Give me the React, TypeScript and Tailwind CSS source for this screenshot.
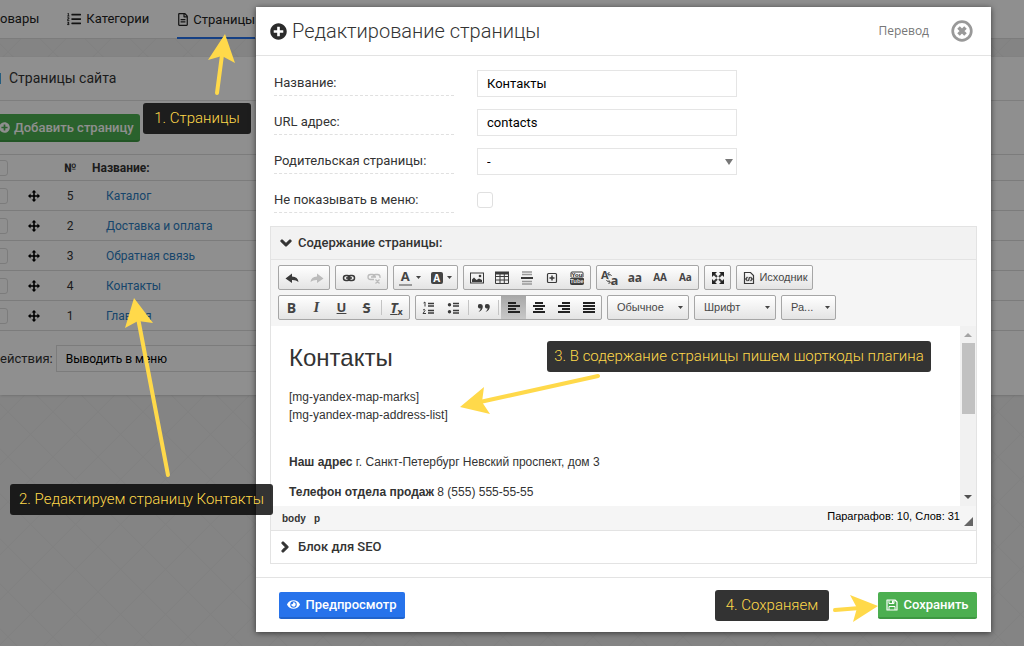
import type { ReactNode } from "react";
import { FaChevronDown, FaChevronRight, FaEye, FaListOl, FaPlusCircle, FaRegFileAlt } from "react-icons/fa";

const PAGES = [
  { id: 5, title: "Каталог" },
  { id: 2, title: "Доставка и оплата" },
  { id: 3, title: "Обратная связь" },
  { id: 4, title: "Контакты" },
  { id: 1, title: "Главная" },
];

const ALIGN = {
  left: ["M2 3h8", "M2 6h12", "M2 9h8", "M2 12h12"],
  center: ["M4 3h8", "M2 6h12", "M4 9h8", "M2 12h12"],
  right: ["M6 3h8", "M2 6h12", "M6 9h8", "M2 12h12"],
  justify: ["M2 3h12", "M2 6h12", "M2 9h12", "M2 12h12"],
};

function MoveIcon() {
  return (
    <svg viewBox="0 0 12 12" className="mx-auto block h-3 w-3 fill-black">
      <path d="M6 0l2.4 2.6H6.8v2.6h2.6V3.6L12 6 9.4 8.4V6.8H6.8v2.6h1.6L6 12 3.6 9.4h1.6V6.8H2.6v1.6L0 6l2.6-2.4v1.6h2.6V2.6H3.6z" />
    </svg>
  );
}

function FloppyIcon() {
  return (
    <svg viewBox="0 0 12 12" className="h-3 w-3 fill-none stroke-white">
      <path d="M1 1h8l2 2v8H1z" strokeWidth="1.2" strokeLinejoin="round" />
      <path d="M3 1v3.500h5V1M3 11V7.500h6V11" />
      <path d="M6 1.500h1.500v2.500H6z" className="fill-white" stroke="none" />
    </svg>
  );
}

function Backdrop() {
  return (
    <div className="absolute inset-0 overflow-hidden text-[13px] text-[#333]">
      <nav className="flex h-[39px] gap-7 border-b border-[#ddd] bg-white text-[#222]">
        <a href="#products" className="flex items-center">
          овары
        </a>
        <a href="#categories" className="flex items-center gap-[5px]">
          <FaListOl className="h-[14px] w-[14px]" />
          Категории
        </a>
        <a href="#pages" className="flex h-[39px] items-center gap-1 border-b-2 border-[#2773eb] pt-[2px]">
          <FaRegFileAlt className="h-[13px] w-3" />
          Страницы
        </a>
      </nav>

      <section className="mt-[18px] bg-white pb-[23px] shadow">
        <header className="flex h-[44px] items-center gap-2 border-b border-[#e0e0e0]">
          <span className="h-[11px] w-px bg-[#41a5e0]" />
          <h2 className="text-[14px]">Страницы сайта</h2>
        </header>

        <div className="pb-3 pt-[13px]">
          <button className="flex h-[28px] w-[140px] items-center gap-1 rounded-r-[3px] border-b-2 border-[#3e9842] bg-[#4caf50] pt-[1px] font-medium text-white">
            <FaPlusCircle className="-ml-px h-[11px] w-[11px]" />
            Добавить страницу
          </button>
        </div>

        <table className="w-full table-fixed border-collapse">
          <thead>
            <tr className="h-[26px] border-y border-[#ddd]">
              <th className="w-4">
                <input type="checkbox" aria-label="Выбрать все" className="-ml-2 block h-4 w-4 appearance-none rounded-[3px] border border-[#ddd]" />
              </th>
              <th className="w-9" />
              <th className="w-9 text-center text-[12px] font-bold">№</th>
              <th className="pl-1 text-left text-[12px] font-bold">Название:</th>
            </tr>
          </thead>
          <tbody>
            {PAGES.map((page) => (
              <tr key={page.id} className="h-[30px] border-b border-[#ddd]">
                <td>
                  <input type="checkbox" aria-label={page.title} className="-ml-2 block h-4 w-4 appearance-none rounded-[3px] border border-[#ddd]" />
                </td>
                <td>
                  <MoveIcon />
                </td>
                <td className="text-center text-[12px]">{page.id}</td>
                <td className="pl-[18px] text-[12px]">
                  <a href="#page" className="text-[#2b7cc0]">
                    {page.title}
                  </a>
                </td>
              </tr>
            ))}
          </tbody>
        </table>

        <div className="mt-[14px] flex items-center gap-[3px]">
          <label htmlFor="bulk-action">ействия:</label>
          <select id="bulk-action" className="h-[27px] w-[260px] appearance-none border border-[#ddd] pl-[9px] text-[12px] text-black">
            <option>Выводить в меню</option>
          </select>
        </div>
      </section>
    </div>
  );
}

function Field({ id, label, children }: { id: string; label: string; children: ReactNode }) {
  return (
    <div className="grid h-[27px] grid-cols-[180px_260px] gap-[23px]">
      <label htmlFor={id} className="flex h-[26px] items-center border-b border-dashed border-[#e0e0e0]">
        {label}
      </label>
      {children}
    </div>
  );
}

function Group({ className, children }: { className: string; children: ReactNode }) {
  return (
    <div
      className={`flex h-[25px] overflow-hidden rounded-[2px] border border-[#a6a6a6] bg-gradient-to-b from-white to-[#e4e4e4] ${className}`}
    >
      {children}
    </div>
  );
}

interface ToolProps {
  title: string;
  active?: boolean;
  children: ReactNode;
}

function Tool({ title, active, children }: ToolProps) {
  return (
    <button
      title={title}
      className={`flex flex-1 items-center justify-center font-['Open_Sans',sans-serif] font-bold text-[#444] ${
        active ? "bg-gradient-to-b from-[#a8a8a8] to-[#c8c8c8]" : ""
      }`}
    >
      {children}
    </button>
  );
}

function Icon({ children }: { children: ReactNode }) {
  return (
    <svg viewBox="0 0 16 16" className="h-4 w-4 shrink-0 fill-none stroke-[#3a3a3a]">
      {children}
    </svg>
  );
}

function AlignIcon({ kind }: { kind: keyof typeof ALIGN }) {
  return (
    <Icon>
      {ALIGN[kind].map((d) => (
        <path key={d} d={d} strokeWidth="2" className="stroke-[#222]" />
      ))}
    </Icon>
  );
}

function Caret() {
  return (
    <svg viewBox="0 0 5 3" className="h-[3px] w-[5px] shrink-0 fill-[#444]">
      <path d="M0 0h5L2.5 3z" />
    </svg>
  );
}

function Separator() {
  return <span className="mx-[2px] my-1 w-px shrink-0 bg-[#c4c4c4]" />;
}

function Combo({ label, className }: { label: string; className: string }) {
  return (
    <div className={`relative ${className}`}>
      <select
        aria-label={label}
        className="h-[25px] w-full appearance-none rounded-[2px] border border-[#a6a6a6] bg-gradient-to-b from-white to-[#e4e4e4] pl-[9px] font-['Liberation_Sans',sans-serif] text-[11px] text-[#474747]"
      >
        <option>{label}</option>
      </select>
      <span className="pointer-events-none absolute right-[6px] top-[11px]">
        <Caret />
      </span>
    </div>
  );
}

function Toolbar() {
  return (
    <div className="flex flex-col gap-[5px] bg-[#f5f5f5] px-[7px] pb-[6px] pt-[5px]">
      <div className="flex gap-[5px]">
        <Group className="w-[52px]">
          <Tool title="Отменить">
            <Icon>
              <path d="M1.500 8.500L8 3.500v3q6 .3 6.500 5.500Q12 9.800 8 10v3z" className="fill-[#3a3a3a]" stroke="none" />
            </Icon>
          </Tool>
          <Tool title="Повторить">
            <Icon>
              <path d="M14.500 8.500L8 3.500v3q-6 .3-6.500 5.500Q4 9.800 8 10v3z" className="fill-[#bbb]" stroke="none" />
            </Icon>
          </Tool>
        </Group>
        <Group className="w-[53px]">
          <Tool title="Ссылка">
            <Icon>
              <rect x="2.500" y="5.500" width="6.500" height="5" rx="2.500" strokeWidth="1.500" />
              <rect x="7" y="5.500" width="6.500" height="5" rx="2.500" strokeWidth="1.500" />
              <path d="M5 8h6" strokeWidth="1.500" />
            </Icon>
          </Tool>
          <Tool title="Убрать ссылку">
            <Icon>
              <path
                d="M8 9.500H4.500a2.500 2.500 0 0 1 0-5h2A2.500 2.500 0 0 1 9 7M7 7a2.500 2.500 0 0 1 2.500-2.500h2A2.500 2.500 0 0 1 14 7v1M5 7h5M9.500 9.500l4 4M13.500 9.500l-4 4"
                strokeWidth="1.300"
                className="stroke-[#bbb]"
              />
            </Icon>
          </Tool>
        </Group>
        <Group className="w-[65px]">
          <Tool title="Цвет текста">
            <span className="mr-[4px] h-[17px] w-[13px] border-b-2 border-[#999] text-center text-[13px] leading-[15px]">A</span>
            <Caret />
          </Tool>
          <Tool title="Цвет фона">
            <span className="mr-[4px] h-[12px] w-[12px] rounded-[2px] bg-[#444] text-center text-[10px] leading-[12px] text-white">A</span>
            <Caret />
          </Tool>
        </Group>
        <Group className="w-[128px]">
          <Tool title="Изображение">
            <Icon>
              <rect x="1.500" y="3" width="13" height="10" />
              <path d="M3 12v-2.500l2-2 2.500 2.500 2.500-1.500L13 10v2z" className="fill-[#3a3a3a]" stroke="none" />
              <circle cx="11" cy="6" r="1.300" className="fill-[#3a3a3a]" stroke="none" />
            </Icon>
          </Tool>
          <Tool title="Таблица">
            <Icon>
              <path d="M1.500 2.500h13v11h-13zM1.500 6.500h13M1.500 10h13M6 3v10M10.300 3v10" />
              <path d="M1 3h14" strokeWidth="3" />
            </Icon>
          </Tool>
          <Tool title="Горизонтальная линия">
            <Icon>
              <path d="M3 2h10M3 4.500h10M3 11.500h10M3 14h10" className="stroke-[#999]" strokeWidth="1.500" />
              <path d="M2 8h12" strokeWidth="2" />
            </Icon>
          </Tool>
          <Tool title="Вставить блок">
            <Icon>
              <rect x="3.500" y="3.500" width="9" height="9" rx="1" strokeWidth="1.200" />
              <path d="M8 5.500v5M5.500 8h5" strokeWidth="1.500" />
            </Icon>
          </Tool>
          <Tool title="YouTube">
            <Icon>
              <rect x="1.500" y="8" width="13" height="6.500" rx="1" className="fill-[#444]" />
              <path d="M2 7V3q0-1 1-1h10q1 0 1 1v4" />
              <g stroke="none" className="font-['Liberation_Sans',sans-serif] text-[6px] font-bold">
                <text x="8" y="7.3" textAnchor="middle" className="fill-[#222]">
                  You
                </text>
                <text x="8" y="13.4" textAnchor="middle" className="fill-[#ddd]">
                  Tube
                </text>
              </g>
            </Icon>
          </Tool>
        </Group>
        <Group className="w-[103px]">
          <Tool title="Сменить регистр">
            <span className="mb-[6px] text-[11px] leading-none">A</span>
            <svg viewBox="0 0 6 14" className="-mx-[2px] h-[14px] w-[6px] shrink-0 fill-none stroke-[#444]">
              <path d="M5.500 5Q5 3 2 3M3.500 1L1.500 3l2 1.800M.5 9q.5 2 3.500 2M2.500 9.200l2 1.800-2 2" />
            </svg>
            <span className="mt-[5px] text-[13px] leading-none">a</span>
          </Tool>
          <Tool title="Нижний регистр">
            <span className="text-[12px]">aa</span>
          </Tool>
          <Tool title="Верхний регистр">
            <span className="text-[10px]">AA</span>
          </Tool>
          <Tool title="Заглавные буквы">
            <span className="text-[10px]">Aa</span>
          </Tool>
        </Group>
        <Group className="w-[27px]">
          <Tool title="Развернуть">
            <Icon>
              <path d="M4 4l3 3M12 4L9 7M4 12l3-3M12 12L9 9" strokeWidth="2" />
              <path d="M2 2h5L2 7zM14 2v5L9 2zM2 14V9l5 5zM14 14H9l5-5z" className="fill-[#222]" stroke="none" />
            </Icon>
          </Tool>
        </Group>
        <Group className="w-[77px]">
          <button className="flex flex-1 items-center justify-center gap-[2px] font-['Liberation_Sans',sans-serif] text-[11px] text-[#474747]">
            <Icon>
              <path d="M3.500 2.500h6l3 3v8h-9zM6.500 7L4.800 9l1.700 2M9.500 7l1.700 2-1.700 2M8.500 7l-1 4" strokeWidth="1.200" />
            </Icon>
            Исходник
          </button>
        </Group>
      </div>

      <div className="flex gap-[5px]">
        <Group className="w-[132px]">
          <Tool title="Полужирный">
            <span className="text-[14px]">B</span>
          </Tool>
          <Tool title="Курсив">
            <span className="font-['Liberation_Serif',serif] text-[15px] italic">I</span>
          </Tool>
          <Tool title="Подчеркнутый">
            <span className="text-[13px] underline">U</span>
          </Tool>
          <Tool title="Зачеркнутый">
            <span className="text-[14px] line-through">S</span>
          </Tool>
          <Separator />
          <Tool title="Убрать форматирование">
            <span className="text-[14px] italic underline">T</span>
            <span className="mt-2 text-[9px] leading-none">x</span>
          </Tool>
        </Group>
        <Group className="w-[187px]">
          <Tool title="Нумерованный список">
            <Icon>
              <path d="M7 3.500h6M7 6h6M7 10.500h6M7 13h6" strokeWidth="1.500" />
              <path d="M2.500 3L4 2v4.500M2 10q2-1.500 2 .5L2 13.500h3" />
            </Icon>
          </Tool>
          <Tool title="Маркированный список">
            <Icon>
              <path d="M7 3.500h6M7 6h6M7 10.500h6M7 13h6" strokeWidth="1.500" />
              <circle cx="3.500" cy="4.700" r="1.700" className="fill-[#3a3a3a]" stroke="none" />
              <circle cx="3.500" cy="11.700" r="1.700" className="fill-[#3a3a3a]" stroke="none" />
            </Icon>
          </Tool>
          <Separator />
          <Tool title="Цитата">
            <Icon>
              <path
                d="M4.300 4a2.200 2.200 0 1 0 .4 4.300Q4.500 10.500 2.500 12q4.500-1.500 4.300-6Q6.500 4 4.300 4zM11.300 4a2.200 2.200 0 1 0 .4 4.300Q11.500 10.500 9.500 12q4.500-1.500 4.300-6Q13.500 4 11.300 4z"
                className="fill-[#3a3a3a]"
                stroke="none"
              />
            </Icon>
          </Tool>
          <Separator />
          <Tool title="По левому краю" active>
            <AlignIcon kind="left" />
          </Tool>
          <Tool title="По центру">
            <AlignIcon kind="center" />
          </Tool>
          <Tool title="По правому краю">
            <AlignIcon kind="right" />
          </Tool>
          <Tool title="По ширине">
            <AlignIcon kind="justify" />
          </Tool>
        </Group>
        <Combo label="Обычное" className="w-[82px]" />
        <Combo label="Шрифт" className="w-[82px]" />
        <Combo label="Ра..." className="w-[55px]" />
      </div>
    </div>
  );
}

function EditorBody() {
  return (
    <div className="flex h-[180px] font-['Liberation_Sans',sans-serif] text-[12px] leading-[18px] text-[#333]">
      <div className="flex-1 overflow-hidden px-[18px] pt-[18px]">
        <h1 className="mb-4 text-[24px] leading-7">Контакты</h1>
        <p>
          [mg-yandex-map-marks]
          <br />
          [mg-yandex-map-address-list]
        </p>
        <p className="mt-[29px]">
          <b>Наш адрес</b> г. Санкт-Петербург Невский проспект, дом 3
        </p>
        <p className="mt-3">
          <b>Телефон отдела продаж</b> 8 (555) 555-55-55
        </p>
      </div>
      <div className="flex w-4 flex-col items-center bg-[#f1f1f1] py-[7px]">
        <svg viewBox="0 0 8 4" className="h-1 w-2 fill-[#a3a3a3]">
          <path d="M0 4h8L4 0z" />
        </svg>
        <div className="mt-[6px] h-[71px] w-[13px] bg-[#c1c1c1]" />
        <svg viewBox="0 0 8 4" className="mt-auto h-1 w-2 fill-[#505050]">
          <path d="M0 0h8L4 4z" />
        </svg>
      </div>
    </div>
  );
}

function Note({ className, children }: { className: string; children: ReactNode }) {
  return (
    <div
      className={`absolute flex h-[31px] items-center justify-center whitespace-nowrap rounded-[3px] bg-black/80 text-[15px] font-light text-[#ffd94a] ${className}`}
    >
      {children}
    </div>
  );
}

function Arrows() {
  return (
    <svg
      viewBox="0 0 1024 646"
      className="pointer-events-none absolute left-0 top-0 h-[646px] w-[1024px] fill-[#ffd94a] stroke-[#ffd94a]"
    >
      <g strokeWidth="4" strokeLinecap="round">
        <path d="M217 93L222 55" />
        <path d="M168 475L138 318" />
        <path d="M598 376L480 402" />
        <path d="M835 610L860 608" />
      </g>
      <g stroke="none">
        <path d="M225 34L208 60L222 56L235 63z" />
        <path d="M134 298L125 328L138 321L153 323z" />
        <path d="M460 407L484 387L482 402L490 414z" />
        <path d="M878 606L850 595L857 608L853 622z" />
      </g>
    </svg>
  );
}

export default function App() {
  return (
    <div className="relative flow-root min-h-screen bg-[#ececec] bg-[linear-gradient(45deg,transparent_49%,#f5f5f5_49%,#f5f5f5_50%,#e6e6e6_50%,transparent_52%),linear-gradient(-45deg,transparent_49%,#f5f5f5_49%,#f5f5f5_50%,#e6e6e6_50%,transparent_52%)] bg-[length:45px_45px] bg-[position:8px_7px] font-['Roboto',sans-serif]">
      <Backdrop />
      <div className="absolute inset-0 bg-black/44" />

      <main className="relative mb-3 ml-64 mr-[33px] mt-[7px] bg-white text-[13px] text-[#333] shadow-[0_1px_6px_rgba(0,0,0,0.6)]">
        <header className="flex h-[49px] items-center border-b border-[#e3e3e3] pl-[14px] pr-[18px]">
          <FaPlusCircle className="mr-[5px] h-[17px] w-[17px] text-[#2b2b2b]" />
          <h1 className="text-[20px] font-light">Редактирование страницы</h1>
          <button className="ml-auto mr-[22px] font-['Open_Sans',sans-serif] text-[12px] text-[#777]">Перевод</button>
          <button aria-label="Закрыть">
            <svg viewBox="0 0 22 22" className="h-[22px] w-[22px] fill-none stroke-[#999]">
              <circle cx="11" cy="11" r="9.300" strokeWidth="2.700" />
              <path d="M7.500 7.500l7 7M14.500 7.500l-7 7" strokeWidth="3.600" />
            </svg>
          </button>
        </header>

        <form className="flex flex-col gap-3 px-[18px] pt-[14px]">
          <Field id="page-title" label="Название:">
            <input id="page-title" defaultValue="Контакты" className="border border-[#e5e5e5] px-[9px] text-black" />
          </Field>
          <Field id="page-url" label="URL адрес:">
            <input id="page-url" defaultValue="contacts" className="border border-[#e5e5e5] px-[9px] text-black" />
          </Field>
          <Field id="page-parent" label="Родительская страницы:">
            <div className="relative flex">
              <select id="page-parent" className="flex-1 appearance-none border border-[#e5e5e5] px-[9px] text-black">
                <option>-</option>
              </select>
              <svg viewBox="0 0 8 6" className="pointer-events-none absolute right-1 top-[11px] h-[6px] w-2 fill-[#777]">
                <path d="M0 0h8L4 6z" />
              </svg>
            </div>
          </Field>
          <Field id="page-hidden" label="Не показывать в меню:">
            <input id="page-hidden" type="checkbox" className="mt-[5px] h-4 w-4 appearance-none self-start rounded-[3px] border border-[#e0e0e0]" />
          </Field>
        </form>

        <div className="mx-[14px] mb-[13px] mt-3 border border-[#e3e3e3]">
          <button className="flex h-[33px] w-full items-center gap-[6px] border-b border-[#e3e3e3] bg-[#f2f2f2] pl-[9px] font-medium">
            <FaChevronDown className="h-3 w-3 stroke-current stroke-[50]" />
            Содержание страницы:
          </button>
          <Toolbar />
          <EditorBody />
          <div className="flex h-[25px] items-center border-b border-[#e3e3e3] bg-[#f5f5f5] pl-[11px] pr-[3px] font-['Liberation_Sans',sans-serif]">
            <span className="text-[10px] font-bold">body</span>
            <span className="ml-2 text-[10px] font-bold">p</span>
            <span className="mb-1 ml-auto mr-1 text-[11px] text-black">Параграфов: 10, Слов: 31</span>
            <svg viewBox="0 0 9 9" className="mt-[7px] h-[9px] w-[9px] fill-[#666]">
              <path d="M9 0v9H0z" />
            </svg>
          </div>
          <button className="flex h-[32px] w-full items-center gap-[7px] pl-2 font-medium">
            <FaChevronRight className="h-3 w-3 stroke-current stroke-[50]" />
            Блок для SEO
          </button>
        </div>

        <footer className="flex justify-between border-t border-[#e3e3e3] pb-[13px] pl-[23px] pr-[14px] pt-[14px] font-medium text-white">
          <button className="flex h-[27px] w-[126px] items-center justify-center gap-[5px] rounded-[2px] border-b-2 border-[#2163cb] bg-[#2773eb]">
            <FaEye className="h-[13px] w-[13px]" />
            Предпросмотр
          </button>
          <button className="flex h-[27px] w-[99px] items-center justify-center gap-[5px] rounded-[2px] border-b-2 border-[#3e9842] bg-[#4caf50]">
            <FloppyIcon />
            Сохранить
          </button>
        </footer>
      </main>

      <Note className="left-[143px] top-[103px] w-[108px]">1. Страницы</Note>
      <Note className="left-[10px] top-[484px] w-[263px]">2. Редактируем страницу Контакты</Note>
      <Note className="left-[547px] top-[341px] w-[384px]">3. В содержание страницы пишем шорткоды плагина</Note>
      <Note className="left-[715px] top-[590px] w-[114px]">4. Сохраняем</Note>
      <Arrows />
    </div>
  );
}
